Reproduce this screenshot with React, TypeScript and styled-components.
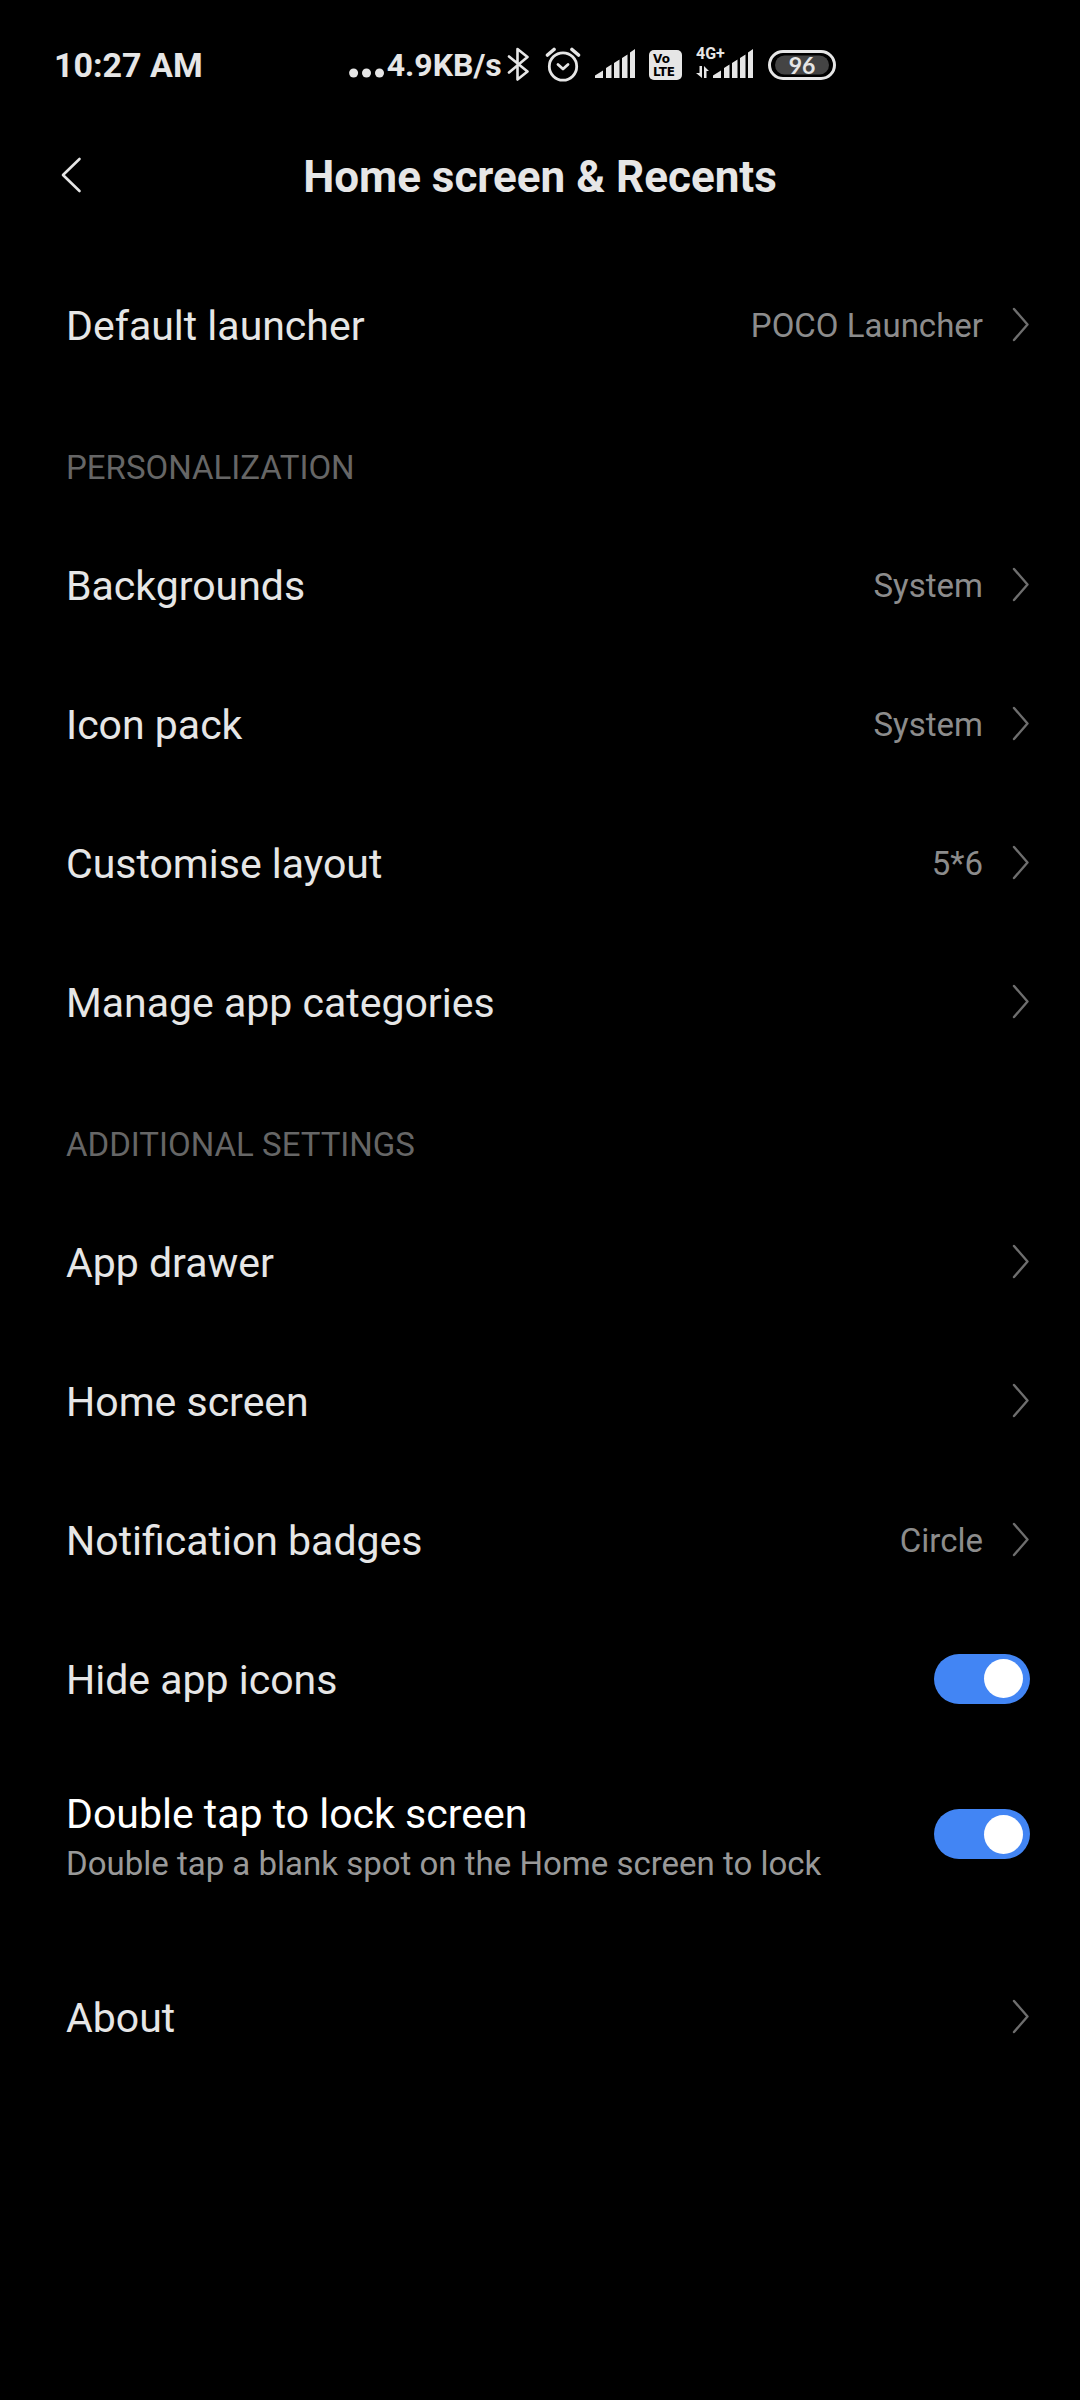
import React, { useState } from "react";
import styled, { createGlobalStyle } from "styled-components";

const GlobalStyle = createGlobalStyle`
  html, body { margin: 0; background: #000; }
  *, *::before { box-sizing: border-box; }
  body { font-family: Roboto, "Noto Sans", sans-serif; color: #e6e6e6; }
`;

const Screen = styled.div`
  min-height: 100vh;
  background: #000;
`;

const StatusBar = styled.div`
  display: flex;
  align-items: center;
  height: 130px;
  padding: 0 54px;
  font-size: 34px;
  line-height: 40px;
  font-weight: 700;
  white-space: nowrap;
`;

const Indicators = styled.div`
  display: flex;
  align-items: center;
  gap: 14px;
  margin-left: 146px;
`;

const Speed = styled.div`
  display: flex;
  align-items: center;
  gap: 2px;
  font-size: 32px;
`;

const TitleBar = styled.header`
  display: grid;
  grid-template-columns: 40px 1fr 40px;
  align-items: center;
  height: 90px;
  margin-bottom: 35px;
  padding: 0 50px;
`;

const BackButton = styled.button`
  display: flex;
  justify-content: center;
  padding: 0;
  border: 0;
  background: none;
  color: inherit;
`;

const Title = styled.h1`
  margin: 0;
  padding-top: 4px;
  font-size: 44px;
  line-height: 52px;
  font-weight: 700;
  text-align: center;
`;

const SectionTitle = styled.h2`
  margin: 0;
  padding: 54px 66px 27px;
  font-size: 33px;
  line-height: 40px;
  font-weight: 400;
  color: #666;
`;

const rowLayout = `
  display: flex;
  align-items: center;
  width: 100%;
  min-height: 139px;
  padding: 0 50px 0 66px;
`;

const LinkRow = styled.a`
  ${rowLayout}
  color: inherit;
  text-decoration: none;
`;

const ToggleRow = styled.label<{ $tall?: boolean }>`
  ${rowLayout}
  ${(p) => p.$tall && "min-height: 172px; margin-bottom: 27px; color: #fff;"}
`;

const RowText = styled.span<{ $tall?: boolean }>`
  display: flex;
  flex: 1;
  flex-direction: column;
  padding-top: ${(p) => (p.$tall ? 10 : 2)}px;
`;

const RowLabel = styled.span`
  font-size: 41px;
  line-height: 50px;
`;

const RowHint = styled.span`
  font-size: 33px;
  line-height: 50px;
  color: #999;
`;

const RowValue = styled.span`
  margin-right: 27px;
  padding-top: 2px;
  font-size: 33px;
  line-height: 40px;
  color: #8c8c8c;
`;

const Switch = styled.input`
  appearance: none;
  display: flex;
  align-items: center;
  width: 96px;
  height: 50px;
  margin: 0;
  padding: 0 7px;
  border-radius: 25px;
  background: #333;

  &::before {
    content: "";
    width: 39px;
    height: 39px;
    border-radius: 50%;
    background: #fff;
  }

  &:checked {
    justify-content: flex-end;
    background: #4285f4;
  }
`;

const Chevron = () => (
  <svg width="20" height="36" viewBox="0 0 20 36" fill="none" stroke="#6e6e6e" strokeWidth="2.4" strokeLinecap="round" strokeLinejoin="round">
    <path d="M4 2 17.500 17.500 4 33" />
  </svg>
);

const SignalBars = () => (
  <svg width="40" height="32" viewBox="0 0 40 32" fill="#e6e6e6">
    <path d="M0 29V26.500L8 21.500V29Z M11 29V19L16.500 15.500V29Z M19 29V14L24.500 10.500V29Z M27 29V9L32.500 5.500V29Z M35 29V3.500L40 0V29Z" />
  </svg>
);

const BluetoothIcon = () => (
  <svg width="27" height="36" viewBox="0 0 27 36" fill="none" stroke="#e6e6e6" strokeWidth="2.6" strokeLinejoin="round" strokeLinecap="round">
    <path d="M5 9.500 23.500 24.500 13.500 32.500V2L23.500 10 5 25.500" />
  </svg>
);

const AlarmIcon = () => (
  <svg width="36" height="36" viewBox="0 0 36 36" fill="none" stroke="#e6e6e6" strokeWidth="2.8" strokeLinecap="round" strokeLinejoin="round">
    <circle cx="18" cy="19.500" r="13.700" />
    <path d="M13 17.500 18 22 23 17.500" />
    <path d="M2.500 8 9 2.500M33.500 8 27 2.500" strokeWidth="3.600" />
  </svg>
);

const VolteIcon = () => (
  <svg width="33" height="30" viewBox="0 0 33 30" fontFamily="DejaVu Sans, sans-serif" fontWeight="700" fontSize="12" fill="#000">
    <rect width="33" height="30" rx="5" fill="#e6e6e6" />
    <text x="4" y="13">Vo</text>
    <text x="4" y="26">LTE</text>
  </svg>
);

const MobileDataIcon = () => (
  <svg width="58" height="44" viewBox="0 0 58 44" fill="#e6e6e6">
    <text x="0" y="16" fontSize="16" fontWeight="700" fontFamily="Roboto, sans-serif">4G+</text>
    <path d="M3.500 23H6V35L0 30H3.500Z M8 23 13 28H10.500V35H8Z" />
    <path d="M17 35V32.500L25 27.500V35Z M28 35V25L33.500 21.500V35Z M36 35V20L41.500 16.500V35Z M44 35V15L49.500 11.500V35Z M52 35V9.500L57 6V35Z" />
  </svg>
);

const BatteryIcon = () => (
  <svg width="68" height="30" viewBox="0 0 68 30">
    <rect x="1.500" y="1.500" width="65" height="27" rx="13.500" fill="none" stroke="#e6e6e6" strokeWidth="3" />
    <rect x="7" y="5.500" width="54" height="19" rx="9.500" fill="#444" />
    <text x="34" y="23.500" fontSize="23" fontWeight="700" fontFamily="Lato, sans-serif" textAnchor="middle" fill="#e6e6e6">96</text>
  </svg>
);

const ActivityDots = () => (
  <svg width="36" height="26" viewBox="0 0 36 26" fill="#e6e6e6">
    <circle cx="4.600" cy="21" r="4.500" />
    <circle cx="17.500" cy="21" r="4.500" />
    <circle cx="30.500" cy="21" r="4.500" />
  </svg>
);

const NavRow = ({ label, value }: { label: string; value?: string }) => (
  <LinkRow href="#">
    <RowText>
      <RowLabel>{label}</RowLabel>
    </RowText>
    {value && <RowValue>{value}</RowValue>}
    <Chevron />
  </LinkRow>
);

const SwitchRow = ({ label, hint }: { label: string; hint?: string }) => {
  const [on, setOn] = useState(true);
  return (
    <ToggleRow $tall={Boolean(hint)}>
      <RowText $tall={Boolean(hint)}>
        <RowLabel>{label}</RowLabel>
        {hint && <RowHint>{hint}</RowHint>}
      </RowText>
      <Switch type="checkbox" role="switch" checked={on} onChange={() => setOn(!on)} />
    </ToggleRow>
  );
};

export default function App() {
  return (
    <Screen>
      <GlobalStyle />
      <StatusBar>
        <span>10:27 AM</span>
        <Indicators>
          <Speed>
            <ActivityDots />
            <span>4.9KB/s</span>
            <BluetoothIcon />
          </Speed>
          <AlarmIcon />
          <SignalBars />
          <VolteIcon />
          <MobileDataIcon />
          <BatteryIcon />
        </Indicators>
      </StatusBar>
      <TitleBar>
        <BackButton aria-label="Back">
          <svg width="24" height="38" viewBox="0 0 24 38" fill="none" stroke="#e6e6e6" strokeWidth="2.6" strokeLinecap="round" strokeLinejoin="round">
            <path d="M21.500 3 5 19 21.500 35" />
          </svg>
        </BackButton>
        <Title>Home screen &amp; Recents</Title>
      </TitleBar>
      <main>
        <NavRow label="Default launcher" value="POCO Launcher" />
        <SectionTitle>PERSONALIZATION</SectionTitle>
        <NavRow label="Backgrounds" value="System" />
        <NavRow label="Icon pack" value="System" />
        <NavRow label="Customise layout" value="5*6" />
        <NavRow label="Manage app categories" />
        <SectionTitle>ADDITIONAL SETTINGS</SectionTitle>
        <NavRow label="App drawer" />
        <NavRow label="Home screen" />
        <NavRow label="Notification badges" value="Circle" />
        <SwitchRow label="Hide app icons" />
        <SwitchRow label="Double tap to lock screen" hint="Double tap a blank spot on the Home screen to lock" />
        <NavRow label="About" />
      </main>
    </Screen>
  );
}
